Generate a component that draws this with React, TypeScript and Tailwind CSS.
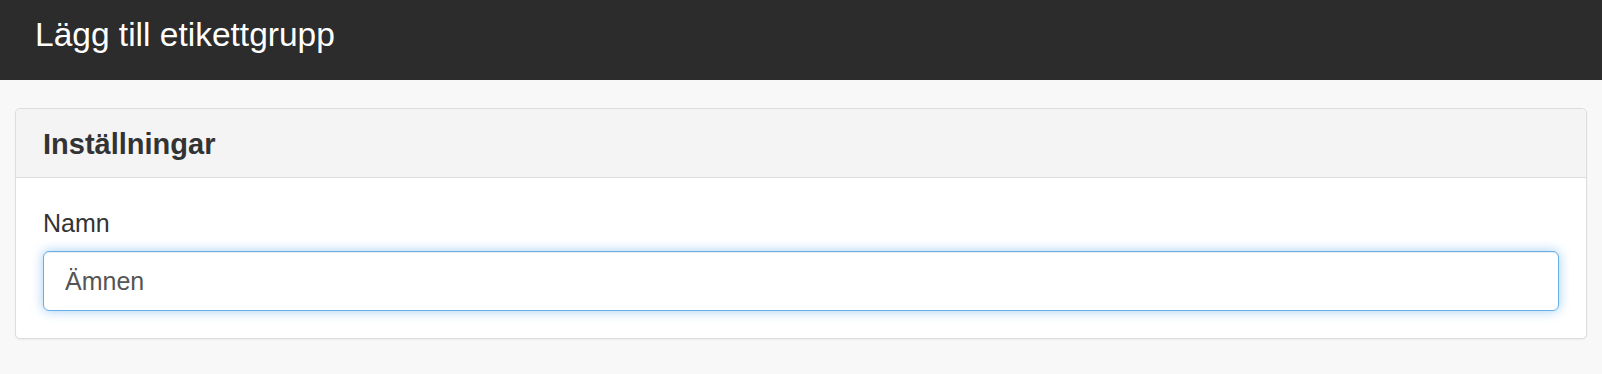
export default function App() {
  return (
    <div className="min-h-screen bg-[#f8f8f8] font-['Liberation_Sans',Arial,sans-serif] text-[#333]">
      <header className="h-[80px] bg-[#2c2c2c] px-[35px] pt-[17px]">
        <h1 className="text-[33.5px] leading-[36px] text-white">Lägg till etikettgrupp</h1>
      </header>

      <main className="px-[15px] pt-[28px]">
        <section className="rounded-[5px] border border-[#dddddd] bg-white shadow-[0_1px_2px_rgba(0,0,0,0.05)]">
          <div className="rounded-t-[5px] border-b border-[#dddddd] bg-[#f4f4f4] px-[27px] pt-[19px] pb-[17px]">
            <h2 className="text-[29px] font-bold leading-[32px] text-[#333]">Inställningar</h2>
          </div>

          <div className="px-[27px] pt-[27px] pb-[27px]">
            <label htmlFor="name" className="block text-[25px] leading-[36px] text-[#333]">
              Namn
            </label>
            <input
              id="name"
              type="text"
              defaultValue="Ämnen"
              className="mt-[10px] block h-[60px] w-full rounded-[6px] border border-[#66afe9] bg-white px-[21px] text-[25px] text-[#555] shadow-[inset_0_1px_1px_rgba(0,0,0,0.075),0_0_12px_rgba(102,175,233,0.6)] outline-none"
            />
          </div>
        </section>
      </main>
    </div>
  );
}
